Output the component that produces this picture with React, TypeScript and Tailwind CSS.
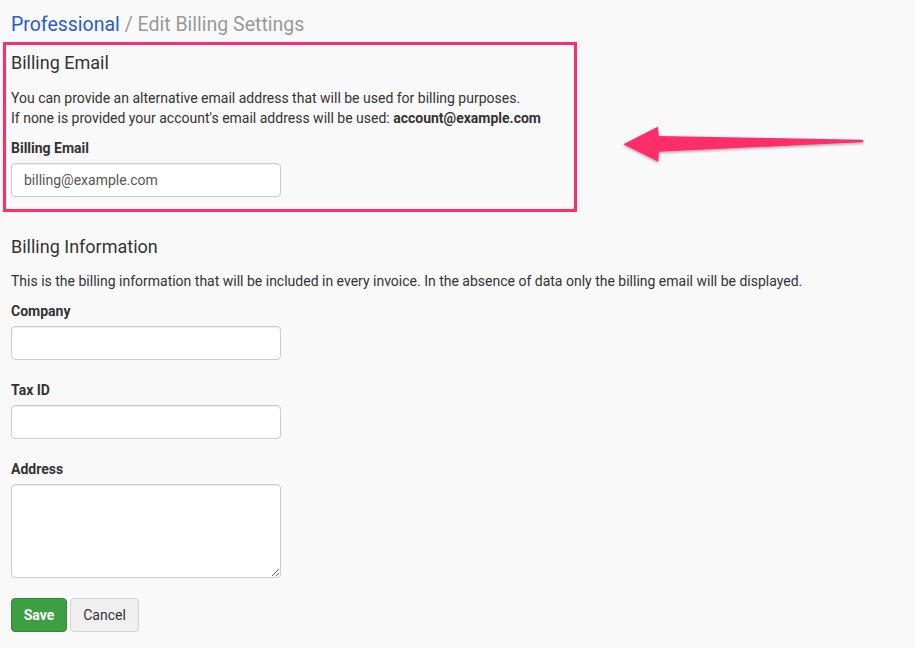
import React from 'react';

const inputCls =
  'block w-[270px] h-[34px] rounded-[4px] border border-[#cccccc] bg-white px-[12px] text-[14px] text-[#555555] shadow-[inset_0_1px_1px_rgba(0,0,0,0.075)] outline-none';

const Field: React.FC<{ label: string; children: React.ReactNode; className?: string }> = ({ label, children, className }) => (
  <div className={className}>
    <label className="block text-[14px] leading-[20px] font-bold text-[#333333] mb-[5px]">{label}</label>
    {children}
  </div>
);

const PointerArrow: React.FC = () => (
  <svg className="absolute left-0 top-0 pointer-events-none" width="915" height="648" viewBox="0 0 915 648">
    <defs>
      <filter id="arrowShadow" x="-10%" y="-50%" width="120%" height="200%">
        <feDropShadow dx="0" dy="1.5" stdDeviation="1.2" floodColor="#000" floodOpacity="0.3" />
      </filter>
    </defs>
    <path
      d="M623.3 144.3 L657.7 126.7 L659 136 L862.7 139.7 Q864.2 141 862.7 142.3 L659 151.7 L658.3 161.7 Z"
      fill="#ff2d6b"
      filter="url(#arrowShadow)"
    />
  </svg>
);

export default function App() {
  return (
    <div className="relative min-h-[648px] w-full bg-[#f9f9f9] text-[#333333] font-['Roboto','Liberation_Sans',sans-serif]">
      <div className="px-[11px] pt-[11px] pb-[16px]">
        <h1 className="text-[19.5px] leading-[28px] font-normal">
          <span className="text-[#2a5bd0]">Professional</span>
          <span className="text-[#999999]"> / Edit Billing Settings</span>
        </h1>

        <section className="-ml-[8px] mt-[3px] w-[574px] border-[3px] border-[#ff2d6b] pl-[5px] pt-[8px] pb-[12px]">
          <h3 className="text-[18px] leading-[20px] font-normal">Billing Email</h3>
          <p className="mt-[15px] text-[14px] leading-[20px]">
            You can provide an alternative email address that will be used for billing purposes.
            <br />
            If none is provided your account's email address will be used: <b>account@example.com</b>
          </p>
          <Field label="Billing Email" className="mt-[10px]">
            <input className={inputCls} defaultValue="billing@example.com" />
          </Field>
        </section>

        <section className="mt-[25px]">
          <h3 className="text-[18px] leading-[20px] font-normal">Billing Information</h3>
          <p className="mt-[14px] text-[14px] leading-[20px]">
            This is the billing information that will be included in every invoice. In the absence of data only the billing email will be displayed.
          </p>
          <Field label="Company" className="mt-[10px]">
            <input className={inputCls} />
          </Field>
          <Field label="Tax ID" className="mt-[20px]">
            <input className={inputCls} />
          </Field>
          <Field label="Address" className="mt-[20px]">
            <textarea className={inputCls + ' h-[94px] py-[6px]'} />
          </Field>
          <div className="mt-[20px] flex gap-[3px]">
            <button className="h-[34px] w-[56px] rounded-[4px] border border-[#2e8b35] bg-[#3d9e42] text-[14px] font-bold text-white">
              Save
            </button>
            <button className="h-[34px] w-[69px] rounded-[4px] border border-[#d4d4d4] bg-[#f0f0f0] text-[14px] text-[#333333]">
              Cancel
            </button>
          </div>
        </section>
      </div>
      <PointerArrow />
    </div>
  );
}
